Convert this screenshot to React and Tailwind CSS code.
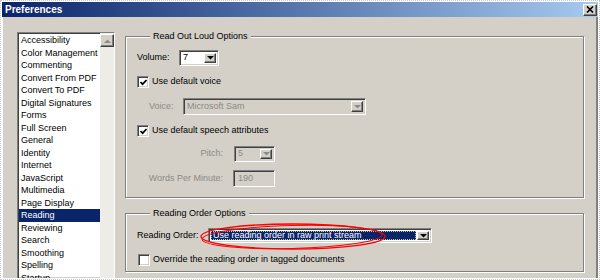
import React from "react";

const items = [
  "Accessibility",
  "Color Management",
  "Commenting",
  "Convert From PDF",
  "Convert To PDF",
  "Digital Signatures",
  "Forms",
  "Full Screen",
  "General",
  "Identity",
  "Internet",
  "JavaScript",
  "Multimedia",
  "Page Display",
  "Reading",
  "Reviewing",
  "Search",
  "Smoothing",
  "Spelling",
  "Startup",
];

const raised =
  "border border-t-white border-l-white border-r-[#404040] border-b-[#404040] shadow-[inset_-1px_-1px_0_#808080]";
const sunken =
  "border border-t-[#808080] border-l-[#808080] border-r-white border-b-white shadow-[inset_1px_1px_0_#404040,inset_-1px_-1px_0_#d4d0c8]";

const Arrow = ({ disabled }) => (
  <svg width="7" height="4" viewBox="0 0 7 4">
    <path d="M0 0h7L3.5 3.5z" fill={disabled ? "#8c8a85" : "#000"} />
  </svg>
);

const DropButton = ({ disabled }) => (
  <div className={`w-[12px] h-full flex items-center justify-center bg-[#d4d0c8] ${raised}`}>
    <Arrow disabled={disabled} />
  </div>
);

const Select = ({ size, value, disabled, focus }) => (
  <div
    className={`flex p-[2px] ${size} ${sunken} ${disabled ? "bg-[#d4d0c8]" : "bg-white"}`}
  >
    <div className="flex-1 flex items-center pr-[1px] min-w-0">
      {focus ? (
        <div className="flex-1 h-full flex items-center bg-[#0a246a] text-white pl-[1px] border border-dotted border-[#c8c4a0] whitespace-nowrap">
          {value}
        </div>
      ) : (
        <span className={`pl-[1px] ${disabled ? "text-[#8c8a85]" : ""}`}>{value}</span>
      )}
    </div>
    <DropButton disabled={disabled} />
  </div>
);

const Checkbox = ({ checked }) => (
  <div className={`w-[12px] h-[12px] bg-white flex items-center justify-center ${sunken}`}>
    {checked && (
      <svg width="7" height="7" viewBox="0 0 7 7">
        <path d="M0.5 3 L2.6 5.2 L6.5 1" stroke="#000" strokeWidth="1.7" fill="none" />
      </svg>
    )}
  </div>
);

const Group = ({ title, className, children }) => (
  <fieldset
    className={`border border-[#808080] shadow-[inset_1px_1px_0_#fff,1px_1px_0_#fff] ${className}`}
  >
    <legend className="ml-[13px] px-[3px] bg-[#d4d0c8] leading-[12px]">{title}</legend>
    {children}
  </fieldset>
);

export default function App() {
  return (
    <div className="relative w-[600px] h-[280px] overflow-hidden bg-white border border-dotted border-[#c8c8c8] p-[1px] font-['Liberation_Sans',Arial,sans-serif] text-[9px] text-black">
      <div className="flex flex-col h-full">
        <div className="h-[15px] shrink-0 flex items-center justify-between pl-[3px] pr-[1px] bg-[linear-gradient(to_right,#0a246a,#a6caf0)]">
          <span className="text-white font-bold text-[10px] leading-none">Preferences</span>
          <div className={`w-[14px] h-[12px] flex items-center justify-center bg-[#d4d0c8] ${raised}`}>
            <svg width="8" height="7" viewBox="0 0 8 7">
              <path d="M1 0.5 L7 6.5 M7 0.5 L1 6.5" stroke="#000" strokeWidth="1.6" />
            </svg>
          </div>
        </div>

        <div className="flex-1 min-h-0 flex bg-[#d4d0c8] border-l border-l-white border-r-2 border-r-[#808080] pl-[14px] pt-[13px]">
          <div className={`mt-[2px] w-[98px] shrink-0 flex bg-white ${sunken} border-b-0`}>
            <div className="flex-1 flex flex-col pt-[1px] pl-[1px] overflow-hidden">
              {items.map((it) => (
                <div
                  key={it}
                  className={`h-[12.5px] leading-[12.5px] pl-[2px] shrink-0 whitespace-nowrap ${
                    it === "Reading" ? "bg-[#0a246a] text-white" : ""
                  }`}
                >
                  {it}
                </div>
              ))}
            </div>
            <div className="w-[14px] flex flex-col bg-[#eeece7] pt-[1px]">
              <div className={`h-[13px] flex items-center justify-center bg-[#d4d0c8] ${raised}`}>
                <svg width="7" height="4" viewBox="0 0 7 4">
                  <path d="M0 4h7L3.5 0.5z" fill="#8c8a85" />
                </svg>
              </div>
            </div>
          </div>

          <div className="ml-[10px] w-[459px] flex flex-col">
            <Group title="Read Out Loud Options" className="h-[168px] shrink-0 pl-[11px]">
              <div className="flex flex-col">
                <div className="flex items-center mt-[8px] h-[16px]">
                  <span className="w-[42px]">Volume:</span>
                  <Select size="w-[40px] h-[16px]" value="7" />
                </div>
                <div className="flex items-center mt-[10px] h-[12px] gap-[3px]">
                  <Checkbox checked />
                  <span>Use default voice</span>
                </div>
                <div className="flex items-center mt-[10px] h-[17px] pl-[12px]">
                  <span className="w-[34px] text-[#8c8a85]">Voice:</span>
                  <Select size="w-[183px] h-[17px]" value="Microsoft Sam" disabled />
                </div>
                <div className="flex items-center mt-[10px] h-[12px] gap-[3px]">
                  <Checkbox checked />
                  <span>Use default speech attributes</span>
                </div>
                <div className="flex items-center mt-[9px] h-[16px]">
                  <span className="w-[86px] text-right text-[#8c8a85]">Pitch:</span>
                  <div className="ml-[11px]">
                    <Select size="w-[41px] h-[16px]" value="5" disabled />
                  </div>
                </div>
                <div className="flex items-center mt-[8px] h-[17px]">
                  <span className="w-[86px] text-right text-[#8c8a85]">Words Per Minute:</span>
                  <div className={`ml-[10px] w-[42px] h-[17px] flex items-center pl-[4px] text-[#8c8a85] bg-[#d4d0c8] ${sunken}`}>
                    190
                  </div>
                </div>
              </div>
            </Group>

            <Group title="Reading Order Options" className="mt-[9px] h-[65px] shrink-0 pl-[11px]">
              <div className="flex flex-col">
                <div className="flex items-center mt-[9px] h-[15px]">
                  <span className="w-[71px]">Reading Order:</span>
                  <Select
                    size="w-[224px] h-[15px]"
                    value="Use reading order in raw print stream"
                    focus
                  />
                </div>
                <div className="flex items-center mt-[11px] h-[12px] gap-[3px] pl-[1px]">
                  <Checkbox />
                  <span>Override the reading order in tagged documents</span>
                </div>
              </div>
            </Group>
          </div>
        </div>
      </div>

      <svg
        className="absolute left-[197px] top-[220px] pointer-events-none"
        width="192"
        height="32"
        viewBox="0 0 192 32"
      >
        <ellipse cx="95" cy="15.5" rx="92" ry="12.5" fill="none" stroke="#ff0000" strokeWidth="1.3" />
        <ellipse
          cx="94"
          cy="16"
          rx="90"
          ry="11.5"
          fill="none"
          stroke="#ff0000"
          strokeWidth="1"
          transform="rotate(-1.5 94 16)"
        />
      </svg>
    </div>
  );
}
